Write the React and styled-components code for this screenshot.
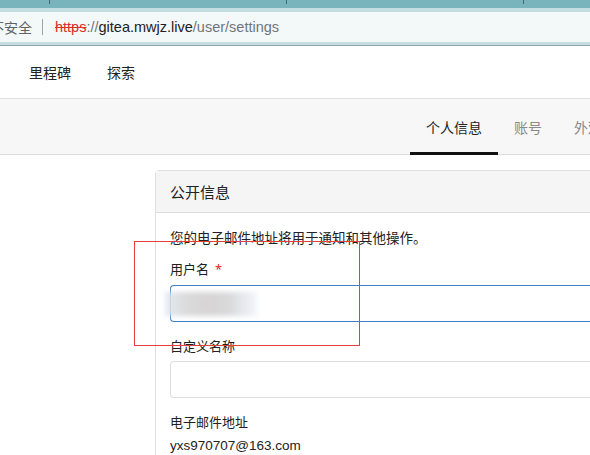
import React from "react";
import styled, { createGlobalStyle } from "styled-components";

const Global = createGlobalStyle`
  html, body { margin: 0; padding: 0; background: #fff; overflow: hidden; }
  body { font-family: "Noto Sans", "Noto Sans CJK SC", sans-serif; color: #212121; width: 590px; height: 455px; }
  * { box-sizing: border-box; }
`;

const Page = styled.div`
  position: relative;
  width: 590px;
  height: 455px;
  overflow: hidden;
`;

const TabStrip = styled.div`
  height: 8px;
  background: #79b4bc;
  display: flex;
  padding-left: 49px;
  gap: 236px;
`;

const Tick = styled.span`
  width: 1px;
  height: 4px;
  background: #3d6a72;
`;

const Chrome = styled.div`
  background: #c3dde0;
  padding: 4px 0 3px;
  border-bottom: 1px solid #8fa7ab;
`;

const AddressBar = styled.div`
  height: 30px;
  background: #f3f8f9;
  display: flex;
  align-items: center;
  font-size: 14px;
  font-family: "Liberation Sans", "Noto Sans CJK SC", sans-serif;
  white-space: nowrap;
`;

const Insecure = styled.span`
  margin-left: -10px;
  color: #5f6368;
  font-family: "Noto Sans CJK SC", sans-serif;
`;

const Divider = styled.span`
  width: 1px;
  height: 16px;
  background: #a0a4a8;
  margin: 0 12px 0 10px;
`;

const Url = styled.span`
  font-size: 14.5px;
`;

const UrlPart = styled.span`
  color: ${(p) => p.$c};
  text-decoration: ${(p) => (p.$strike ? "line-through" : "none")};
  text-decoration-color: #d93025;
`;

const Nav = styled.div`
  height: 53px;
  display: flex;
  align-items: center;
  padding-left: 29px;
  gap: 36px;
  border-bottom: 1px solid #dedede;
  font-size: 14px;
`;

const NavItem = styled.span`
  color: #222;
`;

const TabsBar = styled.div`
  height: 56px;
  background: #f7f7f7;
  border-bottom: 1px solid #dedede;
  display: flex;
  align-items: stretch;
  padding-left: 410px;
  white-space: nowrap;
`;

const Tab = styled.div`
  padding: 0 16px;
  display: flex;
  align-items: center;
  font-size: 14px;
  color: ${(p) => (p.$active ? "#222" : "#8a8a8a")};
  border-bottom: 3px solid ${(p) => (p.$active ? "#111" : "transparent")};
  padding-top: 3px;
  margin-bottom: -1px;
  flex-shrink: 0;
`;

const Content = styled.div`
  padding: 15px 0 0 155px;
`;

const Card = styled.div`
  width: 520px;
  border: 1px solid #dedede;
  border-radius: 4px 0 0 0;
`;

const CardHeader = styled.div`
  height: 42px;
  background: #f5f5f5;
  border-bottom: 1px solid #dedede;
  display: flex;
  align-items: center;
  padding-left: 14px;
  font-size: 15px;
  color: #222;
`;

const CardBody = styled.div`
  padding: 15px 0 0 14px;
  display: flex;
  flex-direction: column;
`;

const Desc = styled.div`
  font-size: 13.5px;
  line-height: 20px;
  margin-bottom: 12px;
`;

const Label = styled.div`
  font-size: 13px;
  line-height: 18px;
  margin-bottom: ${(p) => p.$mb}px;
  margin-top: ${(p) => p.$mt}px;
`;

const Req = styled.span`
  color: #db2828;
  margin-left: 6px;
`;

const InputBox = styled.div`
  position: relative;
  height: 37px;
  border: 1px solid ${(p) => (p.$focus ? "#3f7fc6" : "#dedede")};
  border-radius: 4px 0 0 4px;
  border-right: none;
  background: #fff;
`;

const Blur = styled.div`
  position: absolute;
  left: -6px;
  top: 6px;
  width: 92px;
  height: 24px;
  filter: blur(2.5px);
  background: linear-gradient(
    90deg,
    rgba(225, 230, 240, 0.8) 0%,
    #dcdcdc 20%,
    #d6d4d4 45%,
    #dadada 70%,
    #e6e8ee 85%,
    rgba(235, 238, 244, 0.6) 100%
  );
`;

const Email = styled.div`
  font-family: "Liberation Sans", sans-serif;
  font-size: 13.5px;
  line-height: 20px;
  margin-top: 5px;
  color: #222;
`;

const Annotation = styled.div`
  position: absolute;
  left: 134px;
  top: 241px;
  width: 226px;
  height: 105px;
  border: 1px solid #e5403a;
  pointer-events: none;
`;

export default function App() {
  return (
    <>
      <Global />
      <Page>
        <TabStrip>
          <Tick />
          <Tick />
          <Tick />
        </TabStrip>
        <Chrome>
          <AddressBar>
            <Insecure>不安全</Insecure>
            <Divider />
            <Url>
              <UrlPart $c="#d93025" $strike>https</UrlPart>
              <UrlPart $c="#70757a">://</UrlPart>
              <UrlPart $c="#202124">gitea.mwjz.live</UrlPart>
              <UrlPart $c="#70757a">/user/settings</UrlPart>
            </Url>
          </AddressBar>
        </Chrome>
        <Nav>
          <NavItem>里程碑</NavItem>
          <NavItem>探索</NavItem>
        </Nav>
        <TabsBar>
          <Tab $active>个人信息</Tab>
          <Tab>账号</Tab>
          <Tab>外观</Tab>
        </TabsBar>
        <Content>
          <Card>
            <CardHeader>公开信息</CardHeader>
            <CardBody>
              <Desc>您的电子邮件地址将用于通知和其他操作。</Desc>
              <Label $mb={7} $mt={0}>
                用户名<Req>*</Req>
              </Label>
              <InputBox $focus>
                <Blur />
              </InputBox>
              <Label $mb={6} $mt={15}>自定义名称</Label>
              <InputBox />
              <Label $mb={0} $mt={15}>电子邮件地址</Label>
              <Email>yxs970707@163.com</Email>
            </CardBody>
          </Card>
        </Content>
        <Annotation />
      </Page>
    </>
  );
}
